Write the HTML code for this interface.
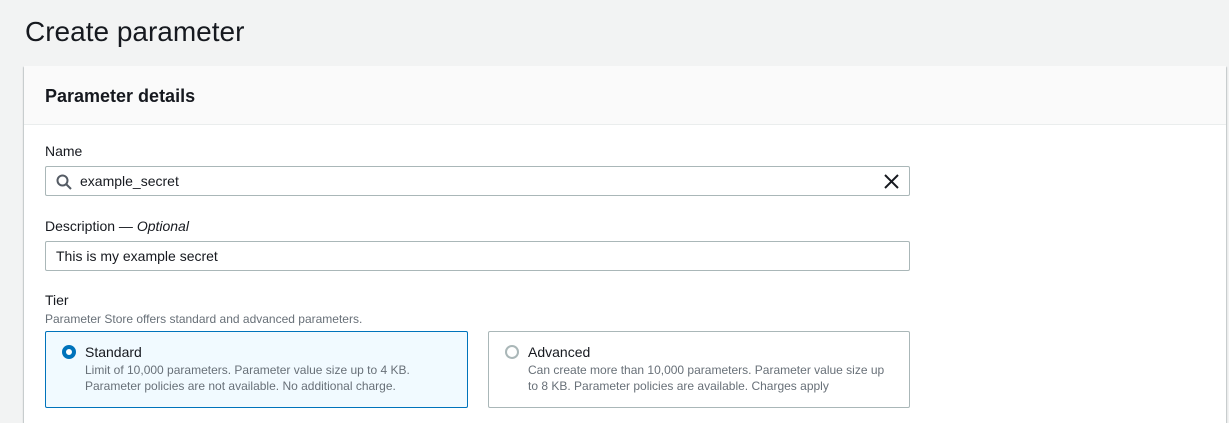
<!DOCTYPE html><html><head><style>
*{box-sizing:border-box;margin:0;padding:0}
html,body{width:1229px;height:423px;overflow:hidden}
body{background:#f2f3f3;font-family:"Liberation Sans",Arial,sans-serif;color:#16191f;position:relative}
.t{position:absolute;left:25px;top:16px;font-size:28px;font-weight:400;color:#16191f}
.panel{position:absolute;left:24px;top:66px;width:1202px;height:357px;background:#fff;box-shadow:0 1px 1px rgba(0,28,36,.3),1px 1px 1px rgba(0,28,36,.15),-1px 1px 1px rgba(0,28,36,.15)}
.hd{height:59px;background:#fafafa;border-bottom:1px solid #eaeded;padding:20px 21px;font-size:18px;font-weight:bold}
.a{position:absolute;font-size:14px}
.in{position:absolute;left:21px;width:865px;height:30px;border:1px solid #aab7b8;border-radius:2px;font-size:14px;padding:6px 10px}
.card{position:absolute;top:265px;width:422px;height:77px;border:1px solid #aab7b8;border-radius:2px}
.card b{position:absolute;left:39px;top:12px;font-weight:normal;font-size:14px}
.card p{position:absolute;left:39px;top:30px;font-size:12px;color:#687078;line-height:16px}
.rad{position:absolute;left:16px;top:13px;width:14px;height:14px;border-radius:50%}
</style></head><body>
<div class="t">Create parameter</div>
<div class="panel">
<div class="hd">Parameter details</div>
<div class="a" style="left:21px;top:77px">Name</div>
<div class="in" style="top:100px;padding-left:34px">
<svg style="position:absolute;left:10px;top:7px" width="16" height="16" viewBox="0 0 16 16"><circle cx="6.5" cy="6.5" r="5" fill="none" stroke="#545b64" stroke-width="2"/><path d="M10 10l5 5" stroke="#545b64" stroke-width="2"/></svg>
example_secret
<svg style="position:absolute;right:10px;top:7px" width="15" height="15" viewBox="0 0 15 15"><path d="M1 1l13 13M14 1L1 14" stroke="#16191f" stroke-width="2"/></svg></div>
<div class="a" style="left:21px;top:152px">Description — <i>Optional</i></div>
<div class="in" style="top:175px">This is my example secret</div>
<div class="a" style="left:21px;top:226px">Tier</div>
<div class="a" style="left:21px;top:246px;font-size:12px;color:#687078">Parameter Store offers standard and advanced parameters.</div>
<div class="card" style="left:21px;width:423px;background:#f1faff;border-color:#0073bb"><div class="rad" style="border:4px solid #0073bb;background:#fff"></div><b>Standard</b><p>Limit of 10,000 parameters. Parameter value size up to 4 KB.<br>Parameter policies are not available. No additional charge.</p></div>
<div class="card" style="left:464px"><div class="rad" style="border:2px solid #aab7b8"></div><b>Advanced</b><p>Can create more than 10,000 parameters. Parameter value size up<br>to 8 KB. Parameter policies are available. Charges apply</p></div>
</div>
</body></html>
